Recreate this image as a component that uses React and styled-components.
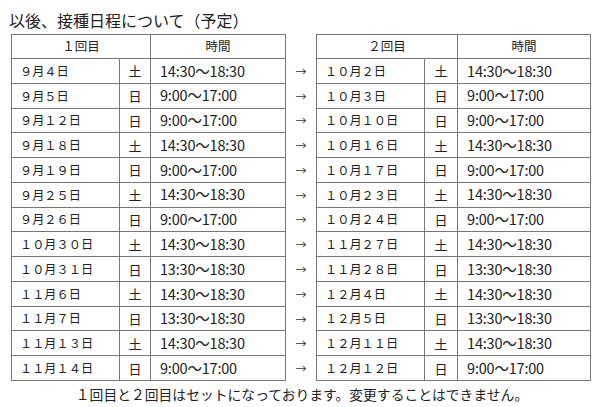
import styled, { createGlobalStyle } from "styled-components"

const rows = [
  ["９月４日", "土", "14:30～18:30", "１０月２日", "土", "14:30～18:30"],
  ["９月５日", "日", "9:00～17:00", "１０月３日", "日", "9:00～17:00"],
  ["９月１２日", "日", "9:00～17:00", "１０月１０日", "日", "9:00～17:00"],
  ["９月１８日", "土", "14:30～18:30", "１０月１６日", "土", "14:30～18:30"],
  ["９月１９日", "日", "9:00～17:00", "１０月１７日", "日", "9:00～17:00"],
  ["９月２５日", "土", "14:30～18:30", "１０月２３日", "土", "14:30～18:30"],
  ["９月２６日", "日", "9:00～17:00", "１０月２４日", "日", "9:00～17:00"],
  ["１０月３０日", "土", "14:30～18:30", "１１月２７日", "土", "14:30～18:30"],
  ["１０月３１日", "日", "13:30～18:30", "１１月２８日", "日", "13:30～18:30"],
  ["１１月６日", "土", "14:30～18:30", "１２月４日", "土", "14:30～18:30"],
  ["１１月７日", "日", "13:30～18:30", "１２月５日", "日", "13:30～18:30"],
  ["１１月１３日", "土", "14:30～18:30", "１２月１１日", "土", "14:30～18:30"],
  ["１１月１４日", "日", "9:00～17:00", "１２月１２日", "日", "9:00～17:00"],
]

const colWidths = [108, 31, 135, 31, 108, 33, 133]

const GlobalStyle = createGlobalStyle`
  body {
    margin: 0;
    background: #fff;
    color: #222;
    font-family: "Noto Sans CJK JP", "Noto Sans", sans-serif;
  }
`

const Page = styled.div`
  width: 600px;
  height: 407px;
  overflow: hidden;
`

const Title = styled.h1`
  margin: 0;
  padding: 12px 0 0 9px;
  height: 34px;
  box-sizing: border-box;
  font-size: 16px;
  line-height: 16px;
  font-weight: 400;
  color: #222;
`

const Schedule = styled.table`
  margin-left: 11px;
  border-collapse: collapse;
  table-layout: fixed;
  width: 579px;
`

const Col = styled.col`
  width: ${(p) => p.$w}px;
`

const Cell = styled.td`
  border: 1px solid #777;
  padding: 0;
  height: 23.77px;
  font-size: 12.2px;
  line-height: 1;
  text-align: left;
  padding-left: 8px;
  white-space: nowrap;
`

const DayCell = styled(Cell)`
  text-align: center;
  padding-left: 0;
  font-size: 13px;
`

const TimeCell = styled(Cell)`
  font-size: 14.5px;
  padding-left: 9px;
  letter-spacing: -0.2px;
`

const HeadCell = styled.th`
  border: 1px solid #777;
  padding: 0;
  height: 23px;
  font-size: 12.5px;
  font-weight: 400;
  text-align: center;
  line-height: 1;
`

const ArrowCell = styled.td`
  border: none;
  padding: 0;
  text-align: center;
  font-size: 11px;
  color: #333;
`

const Note = styled.p`
  margin: 5px 0 0;
  padding-left: 4px;
  text-align: center;
  font-size: 13.8px;
  line-height: 16px;
  color: #222;
`

export default function App() {
  return (
    <Page>
      <GlobalStyle />
      <Title>以後、接種日程について（予定）</Title>
      <Schedule>
        <colgroup>
          {colWidths.map((w, i) => (
            <Col key={i} $w={w} />
          ))}
        </colgroup>
        <thead>
          <tr>
            <HeadCell colSpan={2}>１回目</HeadCell>
            <HeadCell>時間</HeadCell>
            <ArrowCell />
            <HeadCell colSpan={2}>２回目</HeadCell>
            <HeadCell>時間</HeadCell>
          </tr>
        </thead>
        <tbody>
          {rows.map((r, i) => (
            <tr key={i}>
              <Cell>{r[0]}</Cell>
              <DayCell>{r[1]}</DayCell>
              <TimeCell>{r[2]}</TimeCell>
              <ArrowCell>→</ArrowCell>
              <Cell>{r[3]}</Cell>
              <DayCell>{r[4]}</DayCell>
              <TimeCell>{r[5]}</TimeCell>
            </tr>
          ))}
        </tbody>
      </Schedule>
      <Note>１回目と２回目はセットになっております。変更することはできません。</Note>
    </Page>
  )
}
